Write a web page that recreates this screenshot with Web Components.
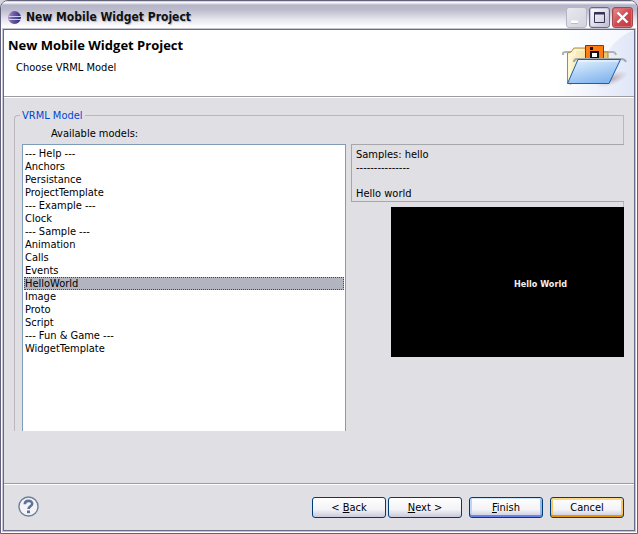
<!DOCTYPE html>
<html lang="en">
<head>
<meta charset="utf-8">
<title>New Mobile Widget Project</title>
<style>
  html, body { margin: 0; height: 100%; }
  body { background: #d4d4de; font: 11px/13px "DejaVu Sans Condensed", "DejaVu Sans", sans-serif; color: #000; }
</style>
</head>
<body>
<script>
function define(name, html, setup) {
  const template = document.createElement('template');
  template.innerHTML = '<style>*{box-sizing:border-box}</style>' + html;
  customElements.define(name, class extends HTMLElement {
    connectedCallback() {
      if (this.shadowRoot) return;
      const root = this.attachShadow({ mode: 'open' });
      root.append(template.content.cloneNode(true));
      if (setup) setup(this, root);
    }
  });
}

define('wizard-window', `
<style>
  :host { display: block; height: 100vh; box-sizing: border-box; overflow: hidden;
    border: 1px solid #62617c; border-radius: 8px 8px 0 0; background: #fff; }
  .frame { display: flex; flex-direction: column; height: 100%; }
  .body { flex: 1; display: flex; flex-direction: column; min-height: 0; margin: 0 2px 2px;
    border: 1px solid #6b6a88; background: #e0dfe4; outline: 1px solid #c3c3d4; }
  .page { flex: 1; min-height: 0; padding: 12px 10px 52px; display: flex; }
  ::slotted(choice-group) { flex: 1; }
</style>
<div class="frame">
  <slot name="titlebar"></slot>
  <div class="body">
    <slot name="header"></slot>
    <main class="page"><slot></slot></main>
    <slot name="footer"></slot>
  </div>
</div>`);

define('title-bar', `
<style>
  :host { display: flex; align-items: center; height: 28px; gap: 4px; padding: 4px 4px 0 6px; box-sizing: border-box;
    background: linear-gradient(#a9a9bd 0, #fff 1px, #f0f0f6 2px, #b4b4c8 4px, #bcbccd 9px, #e4e4ec 18px, #fff 26px);
    font: bold 12px/16px "DejaVu Sans Condensed", "DejaVu Sans", sans-serif; color: #111; }
  h1 { font: inherit; margin: 0; flex: 1; text-shadow: 1px 1px 1px #b4b4c4; }
  .controls { display: flex; gap: 2px; }
  button { width: 21px; height: 21px; padding: 0; border: 1px solid #8080a4; border-radius: 3px;
    background: linear-gradient(135deg, #fff, #dadae6 60%, #b9b9ce); box-shadow: inset 0 0 0 1px #c8c8da; }
  button.min { border-color: #b5b5c5; background: linear-gradient(135deg, #e8e8ef, #d3d3df); box-shadow: none; }
  button.max { border-color: #66678d; }
  button.close { border-color: #a4484e; background: linear-gradient(135deg, #e99090, #d14b50 50%, #bd3942); box-shadow: inset 0 0 0 1px #d56b70; }
  svg { display: block; }
</style>
<svg width="15" height="15" viewBox="0 0 15 15" aria-hidden="true">
  <defs><linearGradient id="g" x2="1" y2=".2"><stop offset="0" stop-color="#e3a1cf"/><stop offset=".35" stop-color="#7769ad"/><stop offset="1" stop-color="#3a2f80"/></linearGradient></defs>
  <circle cx="7.500" cy="7.500" r="6.500" fill="url(#g)"/>
  <path d="M2 6.500H14M2 9.500H14" stroke="#c9d0f3"/>
</svg>
<h1><slot></slot></h1>
<div class="controls">
  <button class="min" aria-label="Minimize"><svg width="19" height="19"><path d="M4 14h7" stroke="#fff" stroke-width="3"/><path d="M4 15.500h7" stroke="#b9b9c9"/></svg></button>
  <button class="max" aria-label="Maximize"><svg width="19" height="19"><path d="M4.500 4.500h10v10h-10z" fill="none" stroke="#343454"/><path d="M4 5.500h11" stroke="#343454" stroke-width="2"/></svg></button>
  <button class="close" aria-label="Close"><svg width="19" height="19"><path d="M4.500 4.500l10 10M14.500 4.500l-10 10" stroke="#fff" stroke-width="2.400"/></svg></button>
</div>`);

define('wizard-header', `
<style>
  :host { display: flex; justify-content: space-between; background: #fff; border-bottom: 1px solid #9d9ca3; box-shadow: 0 1px #fff; height: 67px; box-sizing: border-box; }
  .text { padding: 6px 0 0 4px; }
  h2 { margin: 0; font: bold 13px/18px "Open Sans", "Noto Sans", sans-serif; }
  p { margin: 7px 0 0 8px; }
  svg { display: block; }
</style>
<div class="text"><h2><slot name="heading"></slot></h2><p><slot></slot></p></div>
<svg width="78" height="66" viewBox="0 0 78 66" aria-hidden="true">
  <defs>
    <linearGradient id="bg" x2="1"><stop offset="0" stop-color="#fff"/><stop offset="1" stop-color="#dfe6f7"/></linearGradient>
    <linearGradient id="arc" x2="1"><stop offset="0" stop-color="#fff"/><stop offset="1" stop-color="#f4f7fd"/></linearGradient>
    <linearGradient id="front" x2=".5" y2="1"><stop offset="0" stop-color="#e9f5ff"/><stop offset="1" stop-color="#85b7ef"/></linearGradient>
    <linearGradient id="back" x2="1"><stop offset="0" stop-color="#fff7d4"/><stop offset="1" stop-color="#e8c36c"/></linearGradient>
    <radialGradient id="sh"><stop offset="0" stop-color="#a58f91" stop-opacity=".7"/><stop offset="1" stop-color="#b9a9b0" stop-opacity="0"/></radialGradient>
  </defs>
  <path d="M0 0H78V66H0Z" fill="url(#bg)"/>
  <path d="M0 0H78Q58 8 48 28Q30 46 0 50Z" fill="url(#arc)"/>
  <ellipse cx="56" cy="49" rx="17" ry="6" fill="url(#sh)" transform="rotate(-22 56 49)"/>
  <path d="M7 25V23Q8 22 10 22H57Q59 22 60 25" fill="none" stroke="#b0b2b6" stroke-width="2"/>
  <path d="M11.500 53V23L15 22L18 18H29L32 22H52V46L14 54Z" fill="url(#back)" stroke="#b08a36"/>
  <path d="M14 50V25H19V20H28" fill="none" stroke="#fffbe8"/>
  <path d="M29.500 31V15.500H47.500V31Z" fill="#ff7c12" stroke="#783e08"/>
  <path d="M34 17h3v3h-3zM34 21h9v8h-9z" fill="#111"/><path d="M36 23h5v4h-5z" fill="#fff"/>
  <path d="M18 32Q18 29 21 29H65Q69 29 70 32" fill="none" stroke="#a1a8ae" stroke-width="2"/>
  <path d="M22 29.500H64.500L53 53.500H11.500Z" fill="url(#front)" stroke="#205daa"/>
  <path d="M23 31H62" stroke="#fff" opacity=".8"/>
</svg>`);

define('choice-group', `
<style>
  :host { display: flex; min-width: 0; }
  fieldset { flex: 1; min-width: 0; margin: 0; padding: 0 0 0 7px; border: 1px solid #bdb6bf; border-width: 1px 0 0 1px; border-radius: 4px 0 0 0; display: flex; flex-direction: column; }
  legend { color: #0046d5; padding: 0 2px; margin-left: -2px; }
  .label { border-right: 1px solid #bdb6bf; margin-top: -7px; padding: 12px 0 4px 29px; }
  .cols { flex: 1; min-height: 0; display: grid; grid-template-columns: 324fr 273fr; gap: 5px; }
  select { appearance: none; width: 100%; height: 100%; border: 1px solid #7f9db9; border-bottom: 0; border-radius: 0; padding: 2px 1px; margin: 0; background: #fff; font: inherit; color: #000; overflow: hidden; outline: 0; }
  option { padding: 0 1px; min-height: 13px; line-height: 13px; color: #000; border: 0; }
  option:checked { background: #b2b4bf linear-gradient(#b2b4bf, #b2b4bf); color: #000; outline: 1px dotted #45454c; outline-offset: -1px; }
</style>
<fieldset>
  <legend></legend>
  <div class="label"><label for="list"></label></div>
  <div class="cols"><select id="list" size="20"></select><slot></slot></div>
</fieldset>`, (host, root) => {
  root.querySelector('legend').textContent = host.getAttribute('legend');
  root.querySelector('label').textContent = host.getAttribute('label');
  const list = root.querySelector('select');
  for (const name of host.getAttribute('options').split('|')) {
    list.add(new Option(name, name, false, name === host.getAttribute('selected')));
  }
});

define('model-preview', `
<style>
  :host { display: flex; flex-direction: column; min-width: 0; }
  textarea { display: block; width: 100%; height: 58px; resize: none; overflow: hidden; font: inherit; color: inherit; background: none; margin: 0; border: 1px solid #a7a6aa; border-right: 0; border-radius: 0; padding: 3px 4px 0; outline: 0; }
  .gap { height: 5px; border-right: 1px solid #bdb6bf; }
  .screen { margin-left: 40px; height: 150px; background: #000; color: #f0f0f0; display: grid; place-items: center; padding: 4px 0 0 66px; font: bold 9px/12px "DejaVu Sans Condensed", "DejaVu Sans", sans-serif; }
</style>
<textarea readonly rows="4" aria-label="Description">Samples: hello
---------------

Hello world</textarea>
<div class="gap"></div>
<div class="screen"><span><slot></slot></span></div>`);

define('wizard-footer', `
<style>
  :host { display: flex; align-items: center; height: 47px; box-sizing: border-box; padding: 0 10px 0 14px; border-top: 1px solid #9d9ca3; box-shadow: inset 0 1px #fff; }
  .help { border: 0; padding: 0; margin: 0 auto 0 0; background: none; width: 21px; height: 23px; border-radius: 50%; }
  svg { display: block; margin-bottom: 2px; }
  .nav { display: flex; gap: 2px; margin-right: 7px; }
  .end { display: flex; gap: 7px; }
</style>
<button class="help" aria-label="Help"><svg width="21" height="21" viewBox="0 0 21 21">
  <circle cx="10.500" cy="10.500" r="9.500" fill="#f4f4f6" stroke="#6d7f9e" stroke-width="1.400"/>
  <path d="M6.800 8.200C6.800 3.800 14.200 3.800 14.200 7.800C14.200 10.300 10.700 10.300 10.500 13" fill="none" stroke="#5c7299" stroke-width="2.600"/>
  <path d="M9 14.500h3v2.700h-3z" fill="#5c7299"/>
</svg></button>
<div class="nav"><slot name="nav"></slot></div>
<div class="end"><slot></slot></div>`);

define('push-button', `
<style>
  :host { display: block; }
  button { display: block; width: 74px; height: 21px; padding: 1px 0 0; border: 1px solid #003c74; border-radius: 3px; font: inherit; color: inherit;
    background: linear-gradient(#fff, #f3f3f8 60%, #c9c9dc); }
  :host([kind=default]) button { box-shadow: inset 0 1px #cee7ff, inset 0 -2px #6982ee, inset 2px 0 #bcd4f6, inset -2px 0 #98b8ea; }
  :host([kind=hot]) button { box-shadow: inset 0 2px #fdd889, inset 0 -2px #e59700, inset 2px 0 #fbc761, inset -2px 0 #fbc761; }
</style>
<button type="button"><slot></slot></button>`);
</script>

<wizard-window>
  <title-bar slot="titlebar">New Mobile Widget Project</title-bar>
  <wizard-header slot="header"><span slot="heading">New Mobile Widget Project</span>Choose VRML Model</wizard-header>
  <choice-group legend="VRML Model" label="Available models:" selected="HelloWorld"
    options="--- Help ---|Anchors|Persistance|ProjectTemplate|--- Example ---|Clock|--- Sample ---|Animation|Calls|Events|HelloWorld|Image|Proto|Script|--- Fun &amp; Game ---|WidgetTemplate">
    <model-preview>Hello World</model-preview>
  </choice-group>
  <wizard-footer slot="footer">
    <push-button slot="nav">&lt; <u>B</u>ack</push-button>
    <push-button slot="nav"><u>N</u>ext &gt;</push-button>
    <push-button kind="default"><u>F</u>inish</push-button>
    <push-button kind="hot">Cancel</push-button>
  </wizard-footer>
</wizard-window>
</body>
</html>
